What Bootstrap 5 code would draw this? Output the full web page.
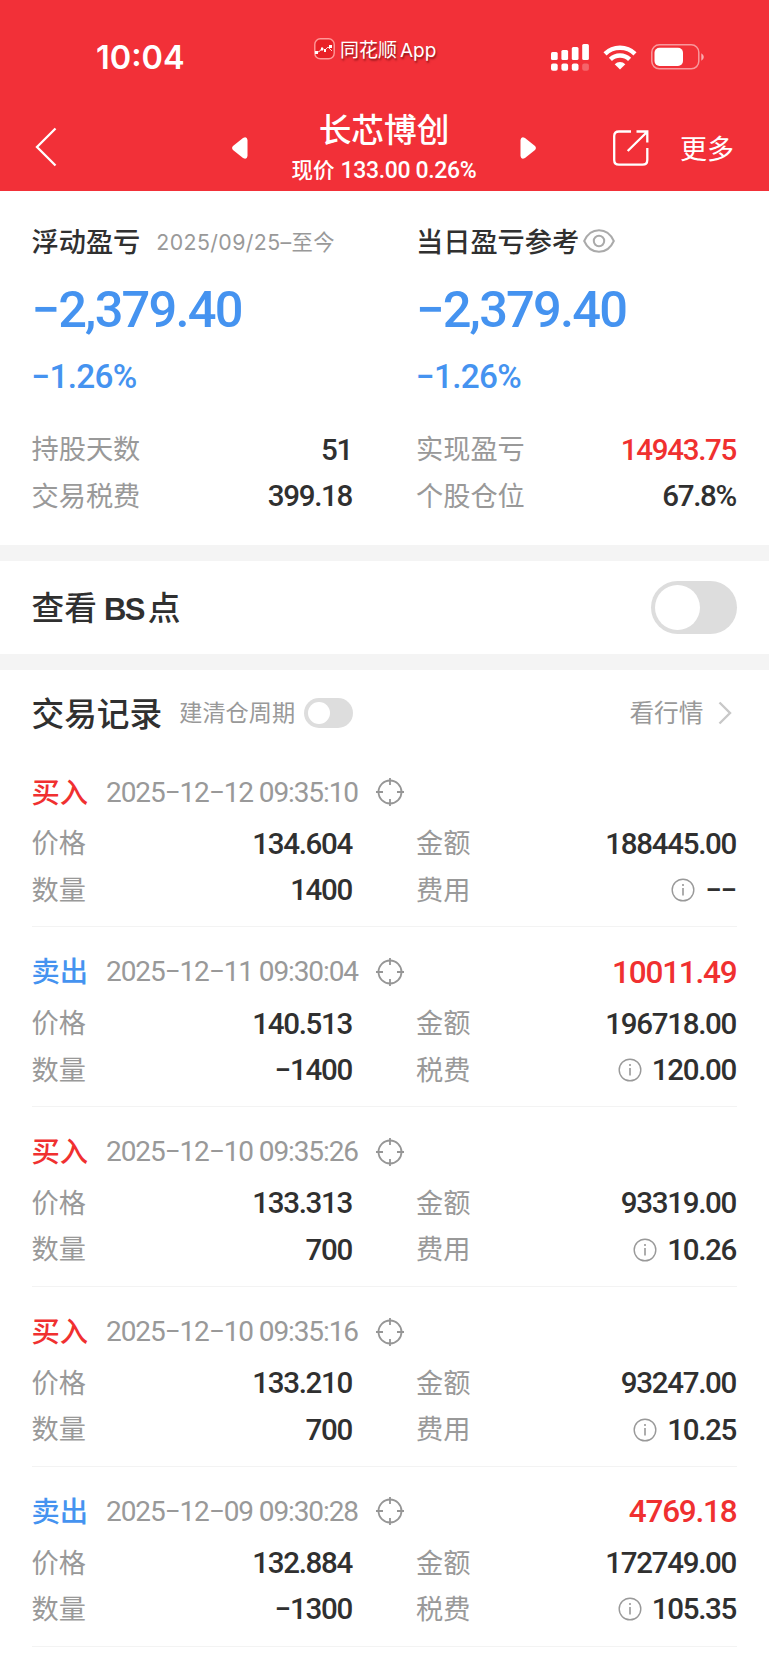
<!DOCTYPE html>
<html lang="zh-CN">
<head>
<meta charset="utf-8">
<meta name="viewport" content="width=device-width, initial-scale=1">
<title>长芯博创</title>
<link href="https://cdn.jsdelivr.net/npm/bootstrap@5.3.0/dist/css/bootstrap.min.css" rel="stylesheet">
<style>
body{font-family:Roboto,"Noto Sans CJK SC",sans-serif;color:#303030;background:#fff;overflow-x:hidden}
svg{display:block;flex:none}
.topbar{background:#f23038;height:191px;color:#fff}
.statusbar{height:114px;padding:0 64px 0 96px}
.clock{font:600 32.5px/1 Inter,sans-serif;width:218px;letter-spacing:0;padding-top:3px}
.appname{font-size:19px;line-height:28px;width:210px;text-shadow:1px 2px 2px rgba(60,0,0,.55);padding-left:5px}
.appname span{font-family:Inter,sans-serif;margin-left:3px}
.titlebar{height:77px;padding:0 34px 0 35px}
.stockname{font-size:32.7px;line-height:40px;font-weight:500;margin-top:-3px}
.quote{font-size:21.5px;line-height:30px;font-weight:500;white-space:nowrap;margin-top:5px}
.quote span{font-size:23px;letter-spacing:-.35px;margin-left:6px}
.more{font-size:27px;line-height:40px;margin-left:31px;white-space:nowrap;flex:none}
.side{padding:0 32.5px 0 31.5px}
.cols{display:grid;grid-template-columns:320.5px 320px;column-gap:64px}
.heading{font-size:27.2px;font-weight:500;height:46px;line-height:50px}
.since{font:400 21.3px/48px Inter,"Noto Sans CJK SC",sans-serif;color:#999;margin-left:16px;letter-spacing:.4px}
.big{font-size:50.6px;line-height:60px;font-weight:500;letter-spacing:-1.8px;color:#4593f0}
.pct{font-size:33.3px;line-height:40px;letter-spacing:-.7px;font-weight:500;color:#4593f0}
.line{display:flex;justify-content:space-between;align-items:center;height:46.4px;line-height:46px}
.key{font-size:27.2px;color:#999;padding-top:2px}
.val{font-size:29.5px;font-weight:500;letter-spacing:-1.3px;padding-top:1px}
.gain{color:#f03030}
.loss{color:#4593f0}
.band{height:15.6px;background:#f4f4f4}
.h-lg{font-size:32.7px;line-height:48px;font-weight:500;padding-top:3px}
.bs{font:700 31px/1 "Liberation Sans",sans-serif;letter-spacing:-1.6px;margin:0 4px 0 7px}
.toggle{display:block;background:#ddd;border-radius:50px;width:86px;height:53px;padding:4px}
.toggle::before{content:"";display:block;width:45px;height:45px;border-radius:50%;background:#fff}
.toggle.mini{width:49px;height:30px}
.toggle.mini::before{width:22px;height:22px}
.record{height:179.8px;border-bottom:1px solid #f3f3f3;padding-top:21.5px}
.record .top{height:46px;line-height:46px;margin-bottom:5px}
.side-tag{font-size:28.3px;font-weight:500;width:74.5px;padding-top:3px}
.when{font-size:28px;color:#999;width:270px;white-space:nowrap;letter-spacing:-1.1px;padding-top:1px}
.profit{font-size:31.5px;font-weight:500;letter-spacing:-1.2px;padding-top:2px}
.fee{margin-right:10px}
</style>
</head>
<body>
<svg width="0" height="0" class="position-absolute">
  <symbol id="aim" viewBox="0 0 28 28"><g fill="none" stroke="#969696" stroke-width="1.8"><circle cx="14" cy="14" r="11.5"/><path d="M14 0v7M14 21v7M0 14h7M21 14h7"/></g></symbol>
  <symbol id="info" viewBox="0 0 24 24"><circle cx="12" cy="12" r="10.8" fill="none" stroke="#999" stroke-width="1.4"/><path d="M12 10v7.5M12 6v2" stroke="#999" stroke-width="1.6"/></symbol>
</svg>
<header class="topbar">
  <div class="statusbar d-flex align-items-center">
    <div class="clock">10:04</div>
    <svg width="21" height="22" viewBox="0 0 21 22" style="margin-top:-17px"><rect x=".8" y=".8" width="19.4" height="20" rx="5.5" fill="#e92027" stroke="#f99" stroke-width="1.4"/><path d="M1 13h3v3H1zM7 9.500h2v3H7zM10 11h2v3h-2zM15 7h3v3h-3z" fill="#fff"/><path d="M4 14l2-1 2-3 3 2 3-3 4 4" fill="none" stroke="#fff" stroke-width=".8"/></svg>
    <div class="appname" style="margin-top:-13px">同花顺<span>App</span></div>
    <svg class="ms-auto" width="38" height="27" viewBox="0 0 38 27" fill="#fff"><rect y="8" width="6.700" height="8" rx="1.500"/><rect x="10.400" y="6" width="6.700" height="10" rx="1.500"/><rect x="20.800" y="3" width="6.700" height="13" rx="1.500"/><rect x="31.200" width="6.700" height="16" rx="1.500"/><rect y="19.400" width="6.700" height="7.400" rx="2"/><rect x="10.400" y="19.400" width="6.700" height="7.400" rx="2"/><rect x="20.800" y="19.400" width="6.700" height="7.400" rx="2"/><rect x="31.200" y="19.400" width="6.700" height="7.400" rx="2" opacity=".25"/></svg>
    <svg style="margin-left:14px" width="34" height="25" viewBox="0 0 34 25"><g fill="none" stroke="#fff" stroke-width="4.400"><path d="M2 8.800a21.500 21.500 0 0 1 30 0"/><path d="M7.400 14.400a13.800 13.800 0 0 1 19.200 0"/></g><path d="M17 24.500l-5.300-5.300a7.600 7.600 0 0 1 10.600 0z" fill="#fff"/></svg>
    <svg style="margin-left:14px" width="54" height="26" viewBox="0 0 54 26"><rect x=".8" y=".8" width="47" height="24" rx="7.500" fill="none" stroke="#fff" stroke-opacity=".5" stroke-width="1.500"/><rect x="3.500" y="3.700" width="28.500" height="18.300" rx="5" fill="#fff"/><path d="M50.300 9.300q5 3.500 0 7.400z" fill="#fff" opacity=".6"/></svg>
  </div>
  <nav class="titlebar d-flex">
    <svg width="22" height="40" viewBox="0 0 22 40" style="margin-top:13px"><path d="M20.500 1.500L2 20 20.500 38.500" fill="none" stroke="#fff" stroke-width="2.300"/></svg>
    <svg width="16" height="22" viewBox="0 0 16 22" style="margin:23px 0 0 175px"><path d="M1 9L11 1Q15-1 15.500 3v16Q15 23 11 21L1 13Q-.8 11 1 9z" fill="#fff"/></svg>
    <div class="text-center flex-shrink-0" style="width:272px"><div class="stockname">长芯博创</div><div class="quote">现价<span>133.00 0.26%</span></div></div>
    <svg width="16" height="22" viewBox="0 0 16 22" style="margin-top:23px"><path d="M15 9L5 1Q1-1 .5 3v16Q1 23 5 21l10-8q1.800-2 0-4z" fill="#fff"/></svg>
    <svg width="36" height="36" viewBox="0 0 36 36" style="margin:16px 0 0 77px" fill="none" stroke="#fff" stroke-width="2.300"><path d="M18 1.500H6Q1.200 1.500 1.200 6v24q0 4.700 4.800 4.700h23.500q4.800 0 4.800-4.700V18M23.500 1.500h10.800v11M34 2L14.700 21"/></svg>
    <div class="more" style="margin-top:16px">更多</div>
  </nav>
</header>

<section class="side" style="height:354px;padding-top:27px">
  <div class="cols">
    <div>
      <div class="heading d-flex">浮动盈亏<span class="since">2025/09/25–至今</span></div>
      <div class="big" style="margin-top:16px">−2,379.40</div>
      <div class="pct" style="margin-top:17px">−1.26%</div>
      <div class="line" style="margin-top:29px"><span class="key">持股天数</span><span class="val">51</span></div>
      <div class="line"><span class="key">交易税费</span><span class="val">399.18</span></div>
    </div>
    <div>
      <div class="heading d-flex">当日盈亏参考<svg style="margin:11px 0 0 4px" width="32" height="24" viewBox="0 0 32 24" fill="none" stroke="#aaa" stroke-width="2"><path d="M1.200 12Q6 1.200 16 1.200T30.800 12Q26 22.800 16 22.800T1.200 12z"/><circle cx="16" cy="12" r="5.200"/></svg></div>
      <div class="big" style="margin-top:16px">−2,379.40</div>
      <div class="pct" style="margin-top:17px">−1.26%</div>
      <div class="line" style="margin-top:29px"><span class="key">实现盈亏</span><span class="val gain">14943.75</span></div>
      <div class="line"><span class="key">个股仓位</span><span class="val">67.8%</span></div>
    </div>
  </div>
</section>
<div class="band"></div>
<section class="side d-flex align-items-center justify-content-between" style="height:93.5px">
  <div class="h-lg">查看<span class="bs">BS</span>点</div>
  <span class="toggle"></span>
</section>
<div class="band"></div>
<section class="side d-flex align-items-center" style="height:78px;padding-top:9px">
  <div class="h-lg">交易记录</div>
  <span style="font-size:23.200px;color:#999;margin:0 9px 0 17px">建清仓周期</span>
  <span class="toggle mini"></span>
  <span class="ms-auto" style="font-size:24.700px;color:#999">看行情</span>
  <svg style="margin:0 5px 0 14px" width="14" height="24" viewBox="0 0 14 24"><path d="M1.500 1.500L12 12 1.500 22.500" fill="none" stroke="#c8c8c8" stroke-width="2.400"/></svg>
</section>
<main class="side">
  <article class="record">
    <div class="top d-flex align-items-center"><span class="side-tag gain">买入</span><span class="when">2025−12−12 09:35:10</span><svg width="28" height="28"><use href="#aim"/></svg></div>
    <div class="cols"><div class="line"><span class="key">价格</span><span class="val">134.604</span></div><div class="line"><span class="key">金额</span><span class="val">188445.00</span></div><div class="line"><span class="key">数量</span><span class="val">1400</span></div><div class="line"><span class="key">费用</span><span class="val d-flex align-items-center"><svg class="fee" width="24" height="24"><use href="#info"/></svg>−−</span></div></div>
  </article>
  <article class="record">
    <div class="top d-flex align-items-center"><span class="side-tag loss">卖出</span><span class="when">2025−12−11 09:30:04</span><svg width="28" height="28"><use href="#aim"/></svg><span class="profit gain ms-auto">10011.49</span></div>
    <div class="cols"><div class="line"><span class="key">价格</span><span class="val">140.513</span></div><div class="line"><span class="key">金额</span><span class="val">196718.00</span></div><div class="line"><span class="key">数量</span><span class="val">−1400</span></div><div class="line"><span class="key">税费</span><span class="val d-flex align-items-center"><svg class="fee" width="24" height="24"><use href="#info"/></svg>120.00</span></div></div>
  </article>
  <article class="record">
    <div class="top d-flex align-items-center"><span class="side-tag gain">买入</span><span class="when">2025−12−10 09:35:26</span><svg width="28" height="28"><use href="#aim"/></svg></div>
    <div class="cols"><div class="line"><span class="key">价格</span><span class="val">133.313</span></div><div class="line"><span class="key">金额</span><span class="val">93319.00</span></div><div class="line"><span class="key">数量</span><span class="val">700</span></div><div class="line"><span class="key">费用</span><span class="val d-flex align-items-center"><svg class="fee" width="24" height="24"><use href="#info"/></svg>10.26</span></div></div>
  </article>
  <article class="record">
    <div class="top d-flex align-items-center"><span class="side-tag gain">买入</span><span class="when">2025−12−10 09:35:16</span><svg width="28" height="28"><use href="#aim"/></svg></div>
    <div class="cols"><div class="line"><span class="key">价格</span><span class="val">133.210</span></div><div class="line"><span class="key">金额</span><span class="val">93247.00</span></div><div class="line"><span class="key">数量</span><span class="val">700</span></div><div class="line"><span class="key">费用</span><span class="val d-flex align-items-center"><svg class="fee" width="24" height="24"><use href="#info"/></svg>10.25</span></div></div>
  </article>
  <article class="record">
    <div class="top d-flex align-items-center"><span class="side-tag loss">卖出</span><span class="when">2025−12−09 09:30:28</span><svg width="28" height="28"><use href="#aim"/></svg><span class="profit gain ms-auto">4769.18</span></div>
    <div class="cols"><div class="line"><span class="key">价格</span><span class="val">132.884</span></div><div class="line"><span class="key">金额</span><span class="val">172749.00</span></div><div class="line"><span class="key">数量</span><span class="val">−1300</span></div><div class="line"><span class="key">税费</span><span class="val d-flex align-items-center"><svg class="fee" width="24" height="24"><use href="#info"/></svg>105.35</span></div></div>
  </article>
</main>
<script src="https://cdn.jsdelivr.net/npm/bootstrap@5.3.0/dist/js/bootstrap.bundle.min.js"></script>
</body>
</html>
